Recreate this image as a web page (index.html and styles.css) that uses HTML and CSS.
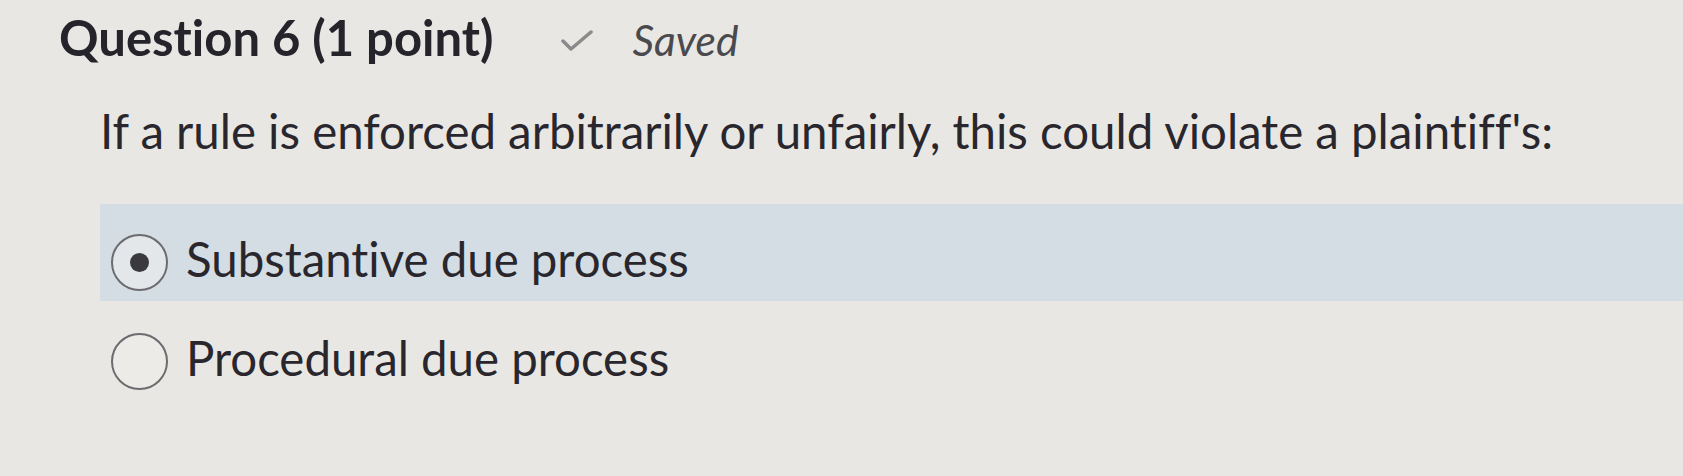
FILE: index.html
```html
<!DOCTYPE html>
<html>
<head>
<meta charset="utf-8">
<link rel="stylesheet" href="styles.css">
</head>
<body>
<div class="page">
  <div class="header">
    <h2 class="title">Question 6 (1 point)</h2>
    <span class="status">
      <svg class="check" width="34" height="22" viewBox="0 0 34 22"><path d="M3 11 L11 19 L31 2" fill="none" stroke="#8a8a8a" stroke-width="3.5" stroke-linecap="round" stroke-linejoin="round"/></svg>
      <span class="saved">Saved</span>
    </span>
  </div>
  <p class="question">If a rule is enforced arbitrarily or unfairly, this could violate a plaintiff's:</p>
  <div class="options">
    <label class="option selected">
      <span class="radio checked"><span class="dot"></span></span>
      <span class="label">Substantive due process</span>
    </label>
    <label class="option">
      <span class="radio"></span>
      <span class="label">Procedural due process</span>
    </label>
  </div>
</div>
</body>
</html>
```

FILE: styles.css
```css
html, body {
  margin: 0;
  padding: 0;
  background: #e8e7e3;
  width: 1683px;
  height: 476px;
  overflow: hidden;
}
.page {
  font-family: Lato, "Open Sans", sans-serif;
  font-variant-ligatures: none;
  color: #2b2930;
  padding: 0 0 0 59px;
}
.header {
  display: flex;
  align-items: baseline;
  height: 74px;
}
.title {
  margin: 0;
  font-size: 49px;
  font-weight: 700;
  line-height: 74px;
  color: #26242b;
}
.status {
  display: flex;
  align-items: baseline;
  margin-left: 67px;
}
.check {
  align-self: center;
  margin-top: 2px;
  margin-right: 38px;
}
.saved {
  font-size: 42.5px;
  font-style: italic;
  color: #4a4a4e;
}
.question {
  margin: 28px 0 0 41px;
  font-size: 47.4px;
  line-height: 57px;
  color: #29272d;
}
.options {
  margin: 45px 0 0 41px;
}
.option {
  display: flex;
  align-items: flex-start;
  height: 97px;
}
.option + .option {
  height: 100px;
}
.option + .option .radio {
  margin-top: 32px;
}
.option + .option .label {
  margin-top: 28px;
}
.option.selected {
  background: #d4dde3;
}
.radio {
  width: 57px;
  height: 57px;
  box-sizing: border-box;
  border: 2.5px solid #6c6c70;
  border-radius: 50%;
  margin: 30px 18px 0 11px;
  display: flex;
  align-items: center;
  justify-content: center;
  background: #ecebe8;
  flex: none;
}
.radio.checked {
  background: #e3e7ea;
}
.dot {
  width: 19px;
  height: 19px;
  border-radius: 50%;
  background: #3a3a3e;
}
.label {
  margin-top: 26px;
  font-size: 47.4px;
  line-height: 57px;
  color: #29272d;
}
```
